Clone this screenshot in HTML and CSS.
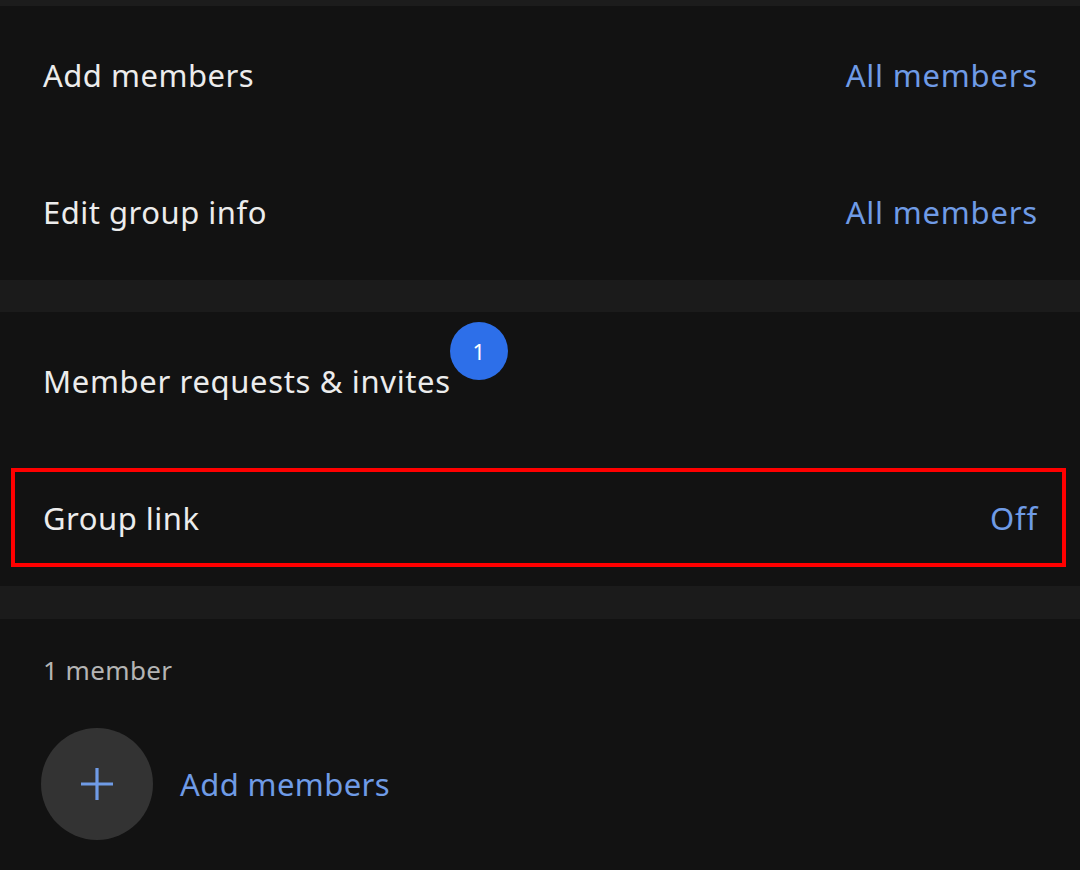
FILE: index.html
```html
<!DOCTYPE html>
<html lang="en">
<head>
  <meta charset="UTF-8">
  <title>Group settings</title>
  <link rel="stylesheet" href="styles.css">
</head>
<body>
  <div class="top-strip"></div>

  <section class="group">
    <div class="row">
      <span class="label">Add members</span>
      <span class="value">All members</span>
    </div>
    <div class="row">
      <span class="label">Edit group info</span>
      <span class="value">All members</span>
    </div>
  </section>

  <div class="divider first"></div>

  <section class="group">
    <div class="row">
      <span class="label with-badge">Member requests &amp; invites<span class="badge">1</span></span>
    </div>
    <div class="row highlighted">
      <span class="label">Group link</span>
      <span class="value">Off</span>
    </div>
  </section>

  <div class="divider"></div>

  <section class="members">
    <div class="members-title">1 member</div>
    <div class="add-row">
      <div class="add-circle">
        <svg width="36" height="36" viewBox="0 0 36 36">
          <path d="M18 2v32M2 18h32" stroke="#6f9be6" stroke-width="3.2" fill="none"/>
        </svg>
      </div>
      <span class="add-label">Add members</span>
    </div>
  </section>
</body>
</html>
```

FILE: styles.css
```css
body {
  margin: 0;
  background: #121212;
  font-family: "Noto Sans", "Open Sans", sans-serif;
  color: #ececec;
  width: 1080px;
  height: 870px;
  overflow: hidden;
}
.top-strip {
  height: 6px;
  background: #1c1c1c;
}
.group {
  background: #121212;
}
.row {
  position: relative;
  height: 137px;
  display: flex;
  align-items: center;
  justify-content: space-between;
  padding: 0 42px 0 43px;
}
.label {
  font-size: 31px;
  letter-spacing: 0.5px;
}
.value {
  font-size: 31px;
  letter-spacing: 0.8px;
  color: #6f9be6;
}
.with-badge {
  position: relative;
  letter-spacing: 0.65px;
}
.badge {
  position: absolute;
  right: -57px;
  top: -38px;
  width: 58px;
  height: 58px;
  border-radius: 50%;
  background: #2d6fe9;
  color: #fff;
  font-size: 22px;
  letter-spacing: 0;
  display: flex;
  align-items: center;
  justify-content: center;
}
.highlighted::after {
  content: "";
  position: absolute;
  left: 11px;
  right: 14px;
  top: 19px;
  height: 99px;
  border: 4px solid #ff0000;
  box-sizing: border-box;
}
.divider {
  height: 33px;
  background: #1b1b1b;
}
.divider.first {
  height: 32px;
}
.members {
  padding: 33px 43px 0 41px;
}
.members-title {
  font-size: 26px;
  letter-spacing: 0.4px;
  color: #b4b4b4;
  padding-left: 2px;
}
.add-row {
  display: flex;
  align-items: center;
  gap: 27px;
  margin-top: 40px;
}
.add-circle {
  width: 112px;
  height: 112px;
  border-radius: 50%;
  background: #333333;
  display: flex;
  align-items: center;
  justify-content: center;
}
.add-label {
  font-size: 31px;
  letter-spacing: 0.4px;
  color: #6f9be6;
}
```
